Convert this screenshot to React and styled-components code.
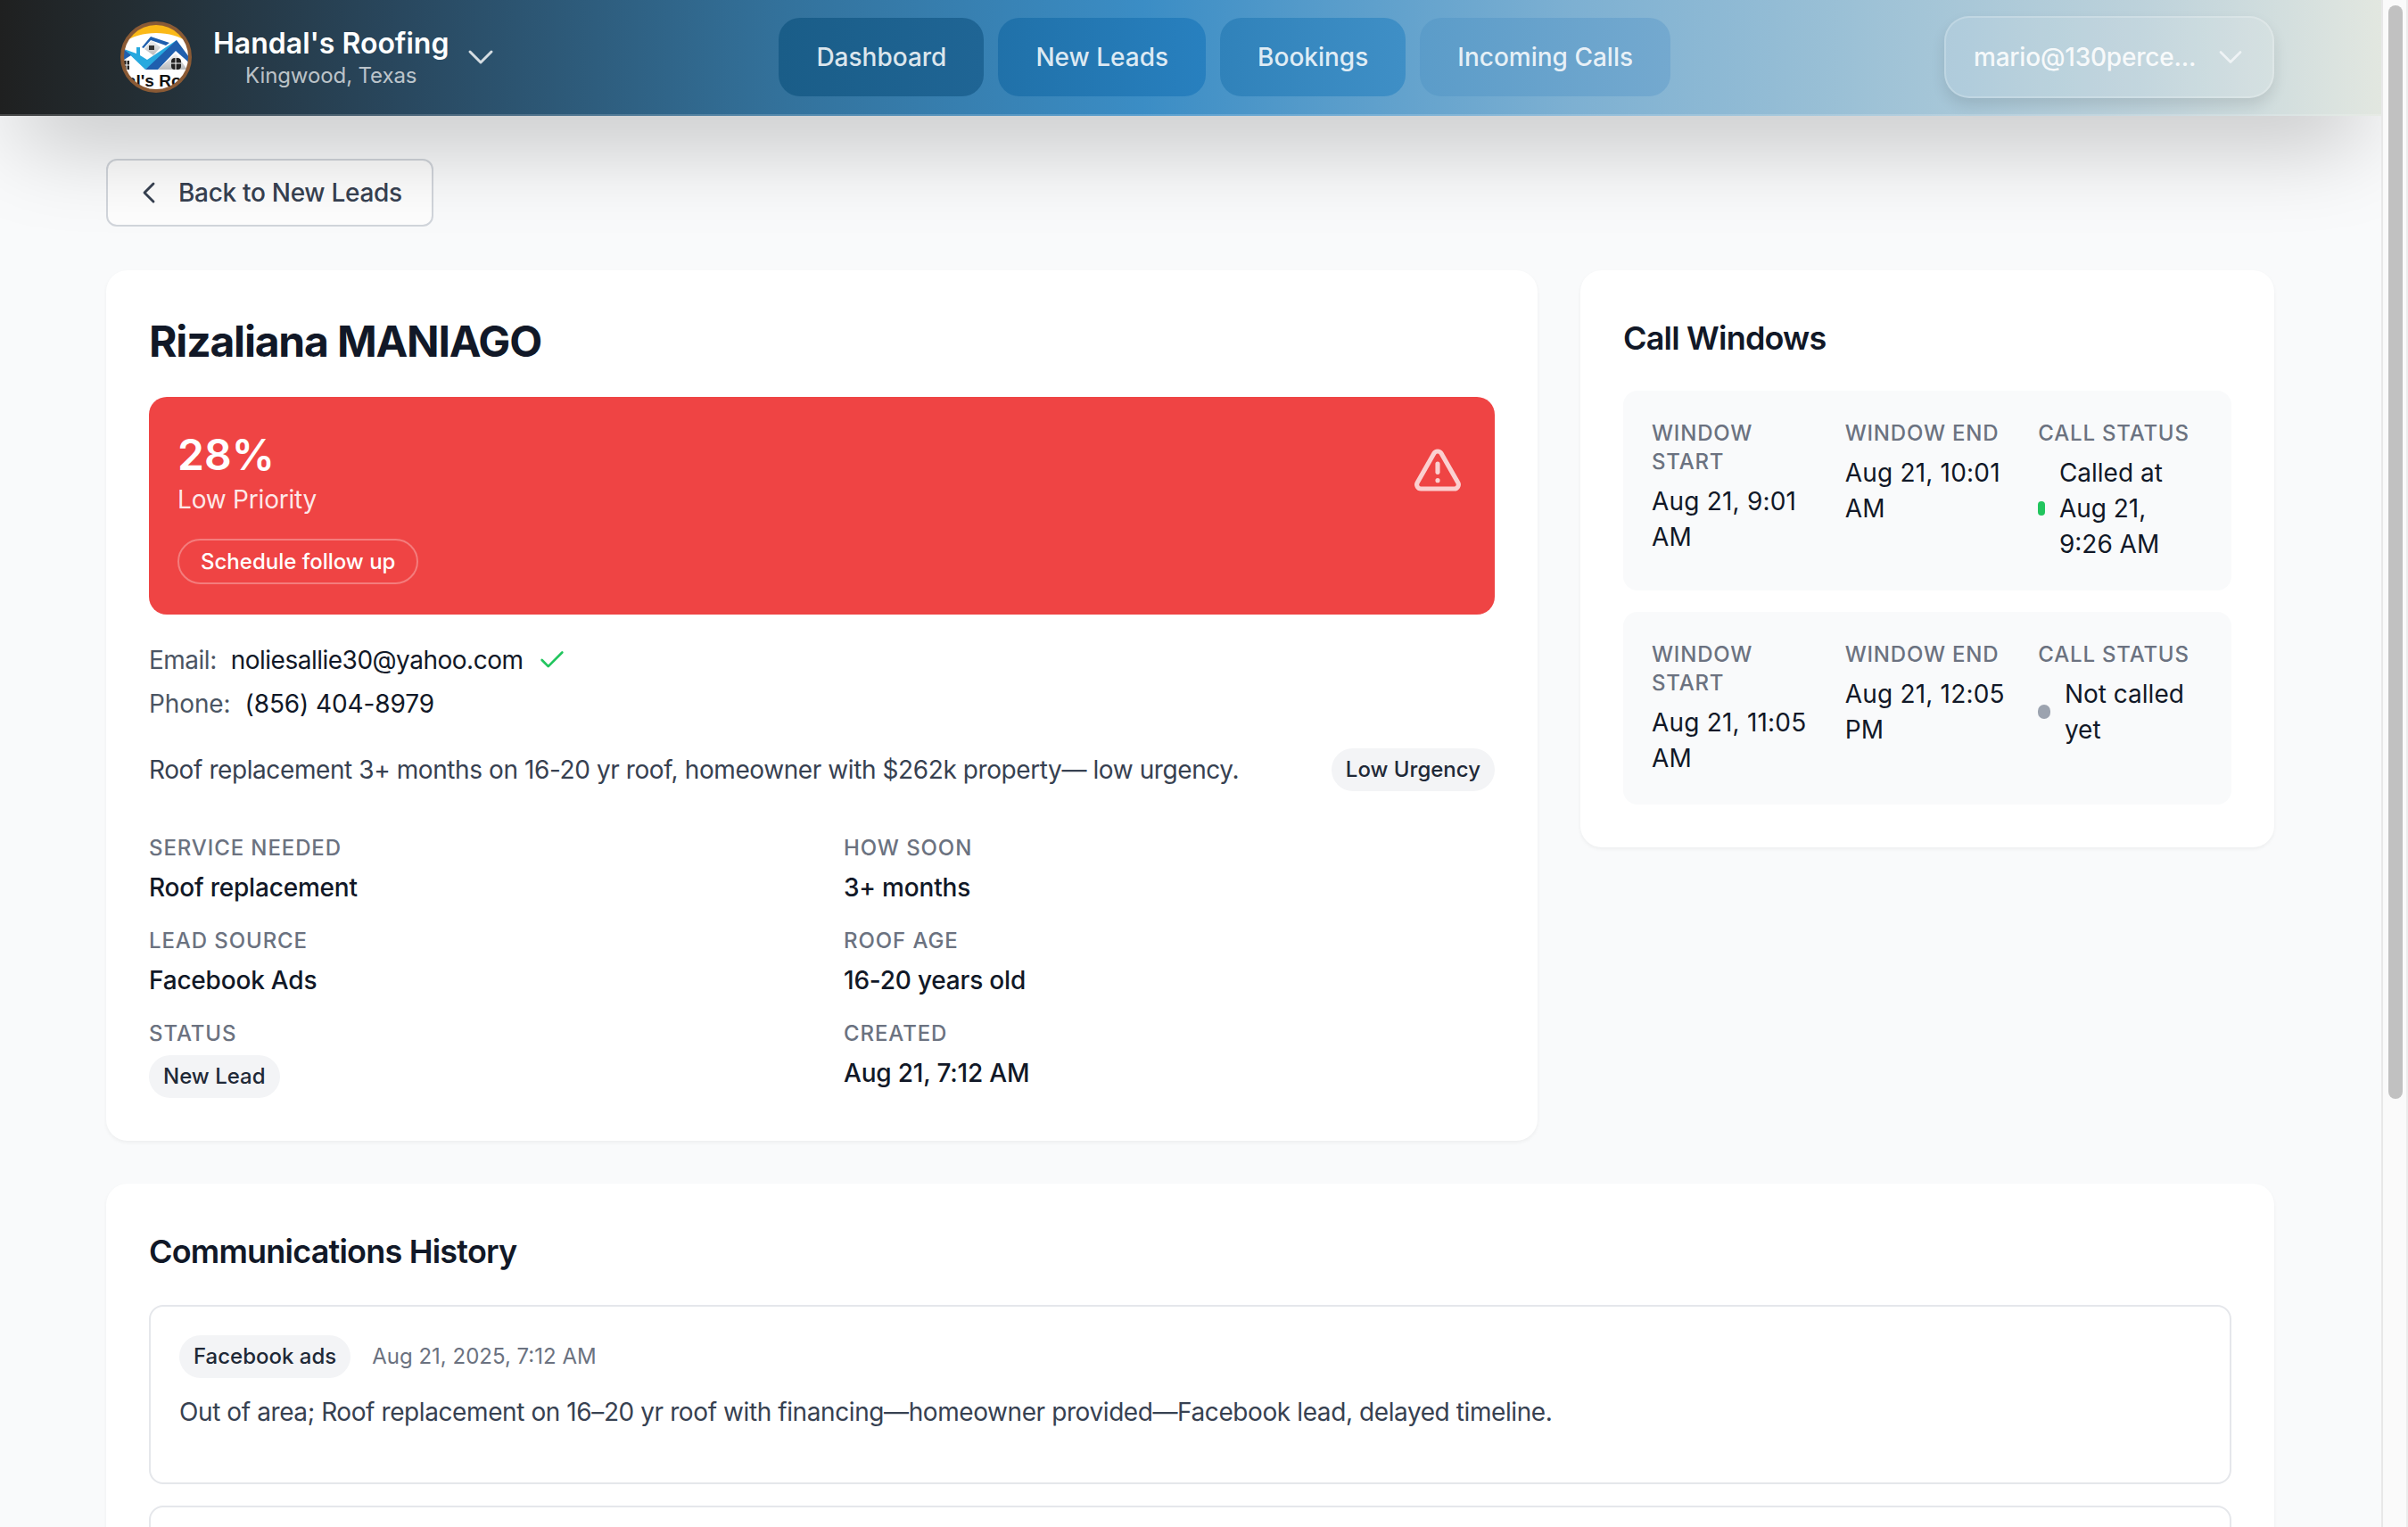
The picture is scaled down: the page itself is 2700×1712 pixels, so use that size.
import React from "react";
import styled, { createGlobalStyle } from "styled-components";
import { Check, ChevronDown, ChevronLeft, TriangleAlert } from "lucide-react";

const GlobalStyle = createGlobalStyle`
  html, body {
    margin: 0;
    height: 100%;
    overflow: hidden;
  }
  body {
    background: #f9fafb;
    font-family: Inter, "Liberation Sans", sans-serif;
    font-size: 28px;
    line-height: 40px;
    color: #111827;
  }
  * {
    box-sizing: border-box;
  }
`;

const Logo = () => (
  <LogoBox viewBox="0 0 80 80">
    <defs>
      <clipPath id="logoClip">
        <circle cx="40" cy="40" r="37" />
      </clipPath>
      <linearGradient id="wallShade" x1="0" y1="0" x2="0" y2="1">
        <stop offset="0" stopColor="#f2f2f2" />
        <stop offset="1" stopColor="#b9bbbd" />
      </linearGradient>
    </defs>
    <g clipPath="url(#logoClip)">
      <rect width="80" height="80" fill="#ffffff" />
      <path d="M0 0h80v27C70 17 55 13 40 13S10 17 0 27z" fill="#fbb917" />
      {/* upper gable */}
      <path d="M27 31l8-10 10 8-8 9z" fill="url(#wallShade)" />
      <path d="M24 29l10-12 21 7-4 3-17-6-8 9z" fill="#1f5fae" />
      <rect x="32" y="27" width="6" height="5" fill="#333333" />
      {/* main roof */}
      <path d="M42 54l20-18 13 18z" fill="url(#wallShade)" />
      <path d="M0 42l5-5 4 13-9 4z" fill="url(#wallShade)" />
      <path d="M4 31l14 5v-7h4v9l8 5 33-22v6L28 54z" fill="#27a9df" />
      <path d="M63 21l17 23v5L62 33 42 54H28z" fill="#1f5fae" />
      <path d="M0 31l4 0 8 7-8 5-4-3z" fill="#1f5fae" />
      <rect x="57" y="41" width="11" height="13" rx="4" fill="#222222" />
      <path d="M62 41v13M57 47h11" stroke="#ffffff" strokeWidth="1" />
      <rect x="4" y="44" width="6" height="10" fill="#222222" />
      <path d="M7 44v10M4 49h6" stroke="#ffffff" strokeWidth="1" />
      <LogoText x="7" y="73">al's Ro</LogoText>
    </g>
    <circle cx="40" cy="40" r="38" fill="none" stroke="#8a5a35" strokeWidth="4" />
  </LogoBox>
);

const fields = [
  { label: "Service Needed", value: "Roof replacement" },
  { label: "How Soon", value: "3+ months" },
  { label: "Lead Source", value: "Facebook Ads" },
  { label: "Roof Age", value: "16-20 years old" },
  { label: "Status", badge: "New Lead" },
  { label: "Created", value: "Aug 21, 7:12 AM" },
];

const callWindows = [
  {
    start: "Aug 21, 9:01 AM",
    end: "Aug 21, 10:01 AM",
    status: "Called at Aug 21, 9:26 AM",
    dot: "#22c55e",
  },
  {
    start: "Aug 21, 11:05 AM",
    end: "Aug 21, 12:05 PM",
    status: "Not called yet",
    dot: "#9ca3af",
  },
];

const navLinks = [
  { name: "Dashboard", from: "#1a5d88", to: "#1f6595" },
  { name: "New Leads", from: "#2071a9", to: "#2880bf" },
  { name: "Bookings", from: "#3082ba", to: "#3f8fc6" },
  { name: "Incoming Calls", from: "#5b9cc9", to: "#74a9cf" },
];

const App = () => {
  return (
    <Screen>
      <GlobalStyle />
      <Page>
        <Header>
          <Brand>
            <Logo />
            <BrandText>
              <BrandName>Handal's Roofing</BrandName>
              <BrandPlace>Kingwood, Texas</BrandPlace>
            </BrandText>
            <BrandCaret>
              <ChevronDown size={48} strokeWidth={1.5} color="#d5dde2" />
            </BrandCaret>
          </Brand>
          <NavLinks>
            {navLinks.map((link) => (
              <NavLink key={link.name} $from={link.from} $to={link.to}>
                {link.name}
              </NavLink>
            ))}
          </NavLinks>
          <UserButton>
            <span>mario@130perce...</span>
            <ChevronDown size={44} strokeWidth={1.5} color="#eef3f5" />
          </UserButton>
        </Header>

        <Content>
          <BackButton>
            <ChevronLeft size={40} strokeWidth={1.7} color="#374151" />
            Back to New Leads
          </BackButton>

          <Columns>
            <Card $pad="48px">
              <LeadName>Rizaliana MANIAGO</LeadName>
              <ScoreBanner>
                <div>
                  <ScoreValue>28%</ScoreValue>
                  <ScoreLabel>Low Priority</ScoreLabel>
                  <FollowUp>Schedule follow up</FollowUp>
                </div>
                <TriangleAlert size={56} strokeWidth={2.2} color="rgba(255,255,255,0.75)" />
              </ScoreBanner>

              <ContactRow>
                <ContactLabel>Email:</ContactLabel>
                <span>noliesallie30@yahoo.com</span>
                <Check size={34} strokeWidth={1.9} color="#22c55e" />
              </ContactRow>
              <ContactRow $phone>
                <ContactLabel>Phone:</ContactLabel>
                <span>(856) 404-8979</span>
              </ContactRow>

              <SummaryRow>
                <Summary>
                  Roof replacement 3+ months on 16-20 yr roof, homeowner with $262k property— low urgency.
                </Summary>
                <Badge>Low Urgency</Badge>
              </SummaryRow>

              <FieldGrid>
                {fields.map((field) => (
                  <div key={field.label}>
                    <FieldLabel>{field.label}</FieldLabel>
                    {field.badge ? (
                      <FieldBadge>{field.badge}</FieldBadge>
                    ) : (
                      <FieldValue>{field.value}</FieldValue>
                    )}
                  </div>
                ))}
              </FieldGrid>
            </Card>

            <Card $pad="48px">
              <SectionTitle>Call Windows</SectionTitle>
              <WindowList>
                {callWindows.map((w) => (
                  <WindowItem key={w.start}>
                    <div>
                      <WindowLabel>Window Start</WindowLabel>
                      <WindowValue>{w.start}</WindowValue>
                    </div>
                    <div>
                      <WindowLabel>Window End</WindowLabel>
                      <WindowValue>{w.end}</WindowValue>
                    </div>
                    <div>
                      <WindowLabel>Call Status</WindowLabel>
                      <StatusRow>
                        <StatusDot $color={w.dot} />
                        <span>{w.status}</span>
                      </StatusRow>
                    </div>
                  </WindowItem>
                ))}
              </WindowList>
            </Card>
          </Columns>

          <HistoryCard $pad="48px">
            <SectionTitle>Communications History</SectionTitle>
            <HistoryList>
              <HistoryItem>
                <HistoryMeta>
                  <Badge>Facebook ads</Badge>
                  <HistoryDate>Aug 21, 2025, 7:12 AM</HistoryDate>
                </HistoryMeta>
                <HistoryText>
                  Out of area; Roof replacement on 16–20 yr roof with financing—homeowner provided—Facebook lead, delayed timeline.
                </HistoryText>
              </HistoryItem>
              <HistoryItem />
            </HistoryList>
          </HistoryCard>
        </Content>
      </Page>
      <ScrollTrack>
        <ScrollThumb />
      </ScrollTrack>
    </Screen>
  );
};

export default App;

const Screen = styled.div`
  display: flex;
  height: 1712px;
  overflow: hidden;
`;

const Page = styled.div`
  flex: 1;
  min-width: 0;
  overflow: hidden;
`;

const ScrollTrack = styled.div`
  width: 30px;
  flex: none;
  padding: 6px 6px 0 6px;
  background: #fafafa;
  border-left: 2px solid #e8e8e8;
  border-right: 2px solid #ececec;
`;

const ScrollThumb = styled.div`
  width: 16px;
  height: 1226px;
  border-radius: 8px;
  background: #c1c1c1;
`;

const Header = styled.header`
  position: relative;
  z-index: 1;
  height: 130px;
  padding: 0 120px 0 135px;
  display: flex;
  align-items: center;
  justify-content: space-between;
  color: #fff;
  border-bottom: 2px solid rgba(255, 255, 255, 0.18);
  background: linear-gradient(
    90deg,
    #1f2020 0%,
    #232c31 5%,
    #29485f 17%,
    #33729c 33%,
    #3b8dc5 48%,
    #7db0d2 66%,
    #9cc1d6 78%,
    #bdd2db 90%,
    #e2e7e0 100%
  );
  box-shadow: 0 50px 100px -24px rgba(0, 0, 0, 0.25);
`;

const Brand = styled.div`
  display: flex;
  align-items: center;
  gap: 24px;
  padding-right: 3px;
`;

const BrandCaret = styled.span`
  display: flex;
  margin-left: -12px;
`;

const LogoBox = styled.svg`
  width: 80px;
  height: 80px;
  flex: none;
`;

const LogoText = styled.text`
  font-family: "Liberation Sans", sans-serif;
  font-size: 19px;
  font-weight: 700;
  fill: #111;
`;

const BrandText = styled.div`
  display: flex;
  flex-direction: column;
  align-items: center;
  padding-top: 2px;
`;

const BrandName = styled.div`
  font-size: 32px;
  line-height: 40px;
  font-weight: 600;
`;

const BrandPlace = styled.div`
  font-size: 24px;
  line-height: 32px;
  letter-spacing: -0.1px;
  color: rgba(255, 255, 255, 0.7);
`;

const NavLinks = styled.nav`
  display: flex;
  gap: 16px;
`;

const NavLink = styled.div`
  height: 88px;
  padding: 0 42px;
  display: flex;
  align-items: center;
  border-radius: 24px;
  font-weight: 500;
  color: rgba(255, 255, 255, 0.85);
  background: linear-gradient(90deg, ${(p) => p.$from}, ${(p) => p.$to});
`;

const UserButton = styled.div`
  width: 370px;
  height: 92px;
  padding: 0 25px 0 31px;
  display: flex;
  align-items: center;
  justify-content: space-between;
  border-radius: 28px;
  font-weight: 500;
  letter-spacing: -0.2px;
  color: rgba(255, 255, 255, 0.9);
  background: rgba(255, 255, 255, 0.1);
  border: 2px solid rgba(255, 255, 255, 0.2);
  box-shadow: 0 8px 16px rgba(0, 0, 0, 0.1);
`;

const Content = styled.main`
  padding: 48px 120px 0 119px;
`;

const BackButton = styled.div`
  width: 367px;
  height: 76px;
  display: flex;
  align-items: center;
  gap: 13px;
  padding-left: 26px;
  border: 2px solid #d1d5db;
  border-radius: 12px;
  font-weight: 500;
  letter-spacing: -0.3px;
  color: #374151;
  background: rgba(255, 255, 255, 0.6);
`;

const Columns = styled.div`
  margin-top: 49px;
  display: grid;
  grid-template-columns: 1605px 778px;
  gap: 48px;
  align-items: start;
`;

const Card = styled.section`
  padding: ${(p) => p.$pad};
  background: #fff;
  border-radius: 24px;
  box-shadow: 0 2px 4px rgba(0, 0, 0, 0.05);
`;

const LeadName = styled.h1`
  margin: 0 0 30px;
  font-size: 48px;
  line-height: 64px;
  font-weight: 700;
  letter-spacing: -1.2px;
`;

const ScoreBanner = styled.div`
  height: 244px;
  padding: 37px 36px 32px 32px;
  display: flex;
  align-items: flex-start;
  justify-content: space-between;
  border-radius: 20px;
  background: #ef4444;
  color: #fff;
  svg {
    margin-top: 17px;
  }
`;

const ScoreValue = styled.div`
  font-size: 48px;
  line-height: 56px;
  font-weight: 600;
`;

const ScoreLabel = styled.div`
  margin-top: 2px;
  letter-spacing: -0.2px;
  color: rgba(255, 255, 255, 0.9);
`;

const FollowUp = styled.div`
  margin-top: 24px;
  width: fit-content;
  height: 51px;
  padding: 0 24px;
  display: flex;
  align-items: center;
  border: 2px solid rgba(255, 255, 255, 0.3);
  border-radius: 26px;
  font-size: 24px;
  font-weight: 500;
`;

const ContactRow = styled.div`
  margin-top: ${(p) => (p.$phone ? "9px" : "31px")};
  display: flex;
  align-items: center;
  gap: 16px;
  letter-spacing: ${(p) => (p.$phone ? "-0.1px" : "-0.5px")};
`;

const ContactLabel = styled.span`
  color: #4b5563;
`;

const SummaryRow = styled.div`
  margin-top: 30px;
  display: flex;
  align-items: center;
  justify-content: space-between;
`;

const Summary = styled.p`
  margin: 0;
  letter-spacing: -0.41px;
  color: #374151;
`;

const Badge = styled.span`
  height: 48px;
  padding: 0 16px;
  display: inline-flex;
  align-items: center;
  flex: none;
  border-radius: 24px;
  font-size: 24px;
  font-weight: 500;
  color: #1f2937;
  background: #f3f4f6;
`;

const FieldBadge = styled(Badge)`
  margin-top: 8px;
`;

const FieldGrid = styled.div`
  margin-top: 48px;
  display: grid;
  grid-template-columns: 779px 1fr;
  row-gap: 24px;
`;

const FieldLabel = styled.div`
  font-size: 24px;
  line-height: 32px;
  font-weight: 500;
  letter-spacing: 0.9px;
  text-transform: uppercase;
  color: #6b7280;
`;

const FieldValue = styled.div`
  margin-top: 8px;
  font-weight: 500;
  letter-spacing: -0.2px;
`;

const SectionTitle = styled.h2`
  margin: 0;
  font-size: 36px;
  line-height: 56px;
  font-weight: 600;
  letter-spacing: -0.8px;
`;

const WindowList = styled.div`
  margin-top: 31px;
  display: flex;
  flex-direction: column;
  gap: 24px;
`;

const WindowItem = styled.div`
  padding: 32px;
  display: grid;
  grid-template-columns: repeat(3, 1fr);
  gap: 32px;
  border-radius: 16px;
  background: #f9fafb;
`;

const WindowLabel = styled.div`
  margin-bottom: 8px;
  font-size: 24px;
  line-height: 32px;
  font-weight: 500;
  letter-spacing: 0.8px;
  text-transform: uppercase;
  color: #6b7280;
`;

const WindowValue = styled.div`
  letter-spacing: 0.2px;
`;

const StatusRow = styled.div`
  display: flex;
  align-items: center;
  gap: 16px;
`;

const StatusDot = styled.span`
  width: 16px;
  height: 16px;
  border-radius: 8px;
  background: ${(p) => p.$color};
`;

const HistoryCard = styled(Card)`
  margin-top: 48px;
`;

const HistoryList = styled.div`
  margin-top: 32px;
  display: flex;
  flex-direction: column;
  gap: 24px;
`;

const HistoryItem = styled.div`
  min-height: 201px;
  padding: 32px 32px 59px;
  border: 2px solid #e5e7eb;
  border-radius: 16px;
`;

const HistoryMeta = styled.div`
  display: flex;
  align-items: center;
  gap: 24px;
`;

const HistoryDate = styled.span`
  font-size: 24px;
  color: #6b7280;
`;

const HistoryText = styled.p`
  margin: 18px 0 0;
  letter-spacing: -0.41px;
  color: #374151;
`;
